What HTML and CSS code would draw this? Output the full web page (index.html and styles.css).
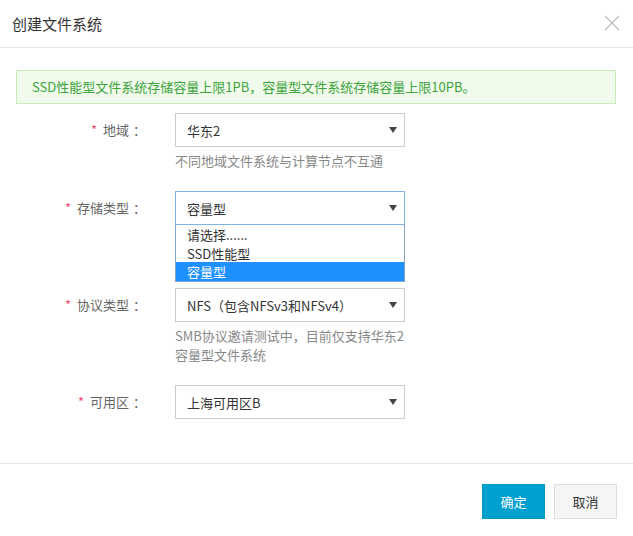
FILE: index.html
```html
<!DOCTYPE html>
<html>
<head>
    <title>创建文件系统</title>
    <link rel="stylesheet" href="styles.css">
</head>
<body>
    <div class="dialog">
        <div class="dialog-header">
            <span class="dialog-title">创建文件系统</span>
            <svg class="close-icon" width="16" height="16" viewBox="0 0 16 16">
                <path d="M1 1 L15 15 M15 1 L1 15" stroke="#bdbdbd" stroke-width="1.3" fill="none"/>
            </svg>
        </div>

        <div class="dialog-body">
            <div class="alert">SSD性能型文件系统存储容量上限1PB，容量型文件系统存储容量上限10PB。</div>

            <div class="form-row">
                <label class="form-label"><span class="required">*</span> 地域<span class="colon">：</span></label>
                <div class="form-control">
                    <div class="select">
                        <span>华东2</span>
                        <svg class="arrow" width="8" height="6" viewBox="0 0 8 6"><path d="M0 0 H8 L4 6 Z" fill="#444"/></svg>
                    </div>
                    <div class="help">不同地域文件系统与计算节点不互通</div>
                </div>
            </div>

            <div class="form-row row-open">
                <label class="form-label"><span class="required">*</span> 存储类型<span class="colon">：</span></label>
                <div class="form-control">
                    <div class="select focused">
                        <span>容量型</span>
                        <svg class="arrow" width="8" height="6" viewBox="0 0 8 6"><path d="M0 0 H8 L4 6 Z" fill="#444"/></svg>
                    </div>
                    <ul class="dropdown">
                        <li>请选择......</li>
                        <li>SSD性能型</li>
                        <li class="active">容量型</li>
                    </ul>
                </div>
            </div>

            <div class="form-row">
                <label class="form-label"><span class="required">*</span> 协议类型<span class="colon">：</span></label>
                <div class="form-control">
                    <div class="select">
                        <span>NFS（包含NFSv3和NFSv4）</span>
                        <svg class="arrow" width="8" height="6" viewBox="0 0 8 6"><path d="M0 0 H8 L4 6 Z" fill="#444"/></svg>
                    </div>
                    <div class="help">SMB协议邀请测试中，目前仅支持华东2<br>容量型文件系统</div>
                </div>
            </div>

            <div class="form-row">
                <label class="form-label"><span class="required">*</span> 可用区<span class="colon">：</span></label>
                <div class="form-control">
                    <div class="select">
                        <span>上海可用区B</span>
                        <svg class="arrow" width="8" height="6" viewBox="0 0 8 6"><path d="M0 0 H8 L4 6 Z" fill="#444"/></svg>
                    </div>
                </div>
            </div>
        </div>

        <div class="dialog-footer">
            <button class="btn btn-primary">确定</button>
            <button class="btn btn-default">取消</button>
        </div>
    </div>
</body>
</html>
```

FILE: styles.css
```css
body {
    margin: 0;
    font-family: "Noto Sans CJK SC", "Noto Sans", sans-serif;
    background-color: #fff;
    color: #333;
}

.dialog {
    width: 633px;
    height: 536px;
    background-color: #fff;
}

.dialog-header {
    height: 48px;
    border-bottom: 1px solid #e5e5e5;
    display: flex;
    align-items: center;
    justify-content: space-between;
    padding: 0 13px 1px 12px;
    box-sizing: border-box;
}

.dialog-title {
    font-size: 15px;
    color: #333;
}

.close-icon {
    margin-top: 0;
}

.dialog-body {
    padding: 22px 17px 0 16px;
    height: 415px;
    box-sizing: border-box;
}

.alert {
    height: 32px;
    line-height: 32px;
    border: 1px solid #c9e8bd;
    background-color: #f1fbec;
    color: #3ca33c;
    font-size: 13px;
    padding-left: 15px;
}

.form-row {
    display: flex;
    margin-top: 9px;
}

.form-row + .form-row {
    margin-top: 21px;
}

.row-open {
    margin-bottom: 63px;
}

.form-label {
    width: 130px;
    text-align: right;
    font-size: 13px;
    color: #666;
    line-height: 34px;
    margin-right: 29px;
}

.required {
    color: #f0506e;
    margin-right: 3px;
}

.colon {
    padding-left: 4px;
}

.form-control {
    width: 230px;
    position: relative;
}

.select {
    height: 32px;
    border: 1px solid #ccc;
    display: flex;
    align-items: center;
    justify-content: space-between;
    padding: 0 7px 0 11px;
    font-size: 13px;
    color: #333;
}

.select.focused {
    border-color: #80b4e6;
}

.help {
    font-size: 13px;
    color: #888;
    line-height: 19px;
    margin-top: 4px;
}

.dropdown {
    position: absolute;
    top: 34px;
    left: 0;
    right: 0;
    margin: 0;
    padding: 0;
    list-style: none;
    border: 1px solid #7fa6cf;
    border-top: none;
    background-color: #fff;
    font-size: 13px;
}

.dropdown li {
    height: 18.7px;
    line-height: 19px;
    padding-left: 11px;
    color: #333;
}

.dropdown li.active {
    background-color: #1e90ff;
    color: #fff;
}

.dialog-footer {
    border-top: 1px solid #e5e5e5;
    display: flex;
    justify-content: flex-end;
    gap: 9px;
    padding: 20px 16px 0 0;
}

.btn {
    height: 35px;
    width: 63px;
    font-family: "Noto Sans CJK SC", "Noto Sans", sans-serif;
    font-size: 13px;
    cursor: pointer;
    margin: 0;
}

.btn-primary {
    background-color: #00a0cf;
    border: 1px solid #0099c6;
    color: #fff;
}

.btn-default {
    background-color: #f5f5f5;
    border: 1px solid #ddd;
    color: #333;
}
```
